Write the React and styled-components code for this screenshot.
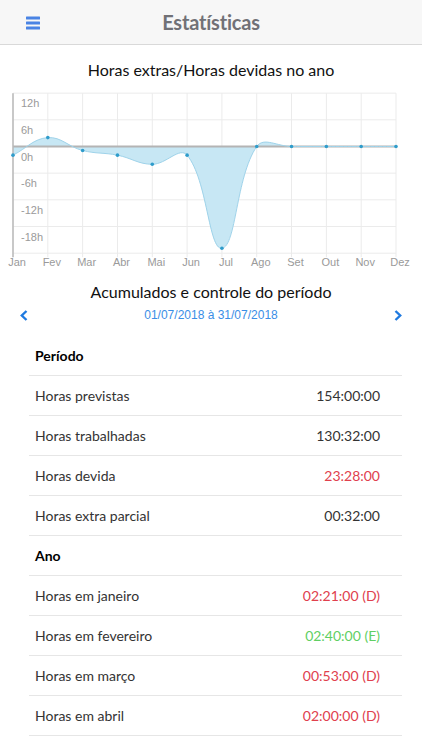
import React from 'react';
import styled, { createGlobalStyle } from 'styled-components';

const GlobalStyle = createGlobalStyle`
  body {
    margin: 0;
    background: #ffffff;
    font-family: Lato, "Open Sans", sans-serif;
    color: #222;
  }
`;

const MONTHS = ['Jan', 'Fev', 'Mar', 'Abr', 'Mai', 'Jun', 'Jul', 'Ago', 'Set', 'Out', 'Nov', 'Dez'];
const VALUES = [-1.95, 2.0, -0.9, -1.95, -4.0, -1.95, -22.9, 0, 0, 0, 0, 0];
const TICKS = [12, 6, 0, -6, -12, -18, -24];

const periodRows = [
  { label: 'Horas previstas', value: '154:00:00' },
  { label: 'Horas trabalhadas', value: '130:32:00' },
  { label: 'Horas devida', value: '23:28:00', tone: 'debt' },
  { label: 'Horas extra parcial', value: '00:32:00' },
];

const yearRows = [
  { label: 'Horas em janeiro', value: '02:21:00 (D)', tone: 'debt' },
  { label: 'Horas em fevereiro', value: '02:40:00 (E)', tone: 'extra' },
  { label: 'Horas em março', value: '00:53:00 (D)', tone: 'debt' },
  { label: 'Horas em abril', value: '02:00:00 (D)', tone: 'debt' },
  { label: 'Horas em maio', value: '04:00:00 (D)', tone: 'debt' },
];

const X0 = 13;
const X1 = 396;
const ZERO = 61.5;
const PX_PER_H = 26.67 / 6;

const xAt = (i) => X0 + (i * (X1 - X0)) / 11;
const yAt = (h) => ZERO - h * PX_PER_H;

// chart.js style spline
const buildCurve = (pts, t = 0.4) => {
  const ctrl = pts.map((p, i) => {
    const prev = pts[i - 1] || p;
    const next = pts[i + 1] || p;
    const d01 = Math.hypot(p.x - prev.x, p.y - prev.y);
    const d12 = Math.hypot(next.x - p.x, next.y - p.y);
    const sum = d01 + d12 || 1;
    const fa = (t * d01) / sum;
    const fb = (t * d12) / sum;
    return {
      inX: p.x - fa * (next.x - prev.x),
      inY: p.y - fa * (next.y - prev.y),
      outX: p.x + fb * (next.x - prev.x),
      outY: p.y + fb * (next.y - prev.y),
    };
  });
  let d = `M${pts[0].x},${pts[0].y}`;
  for (let i = 1; i < pts.length; i++) {
    const a = ctrl[i - 1];
    const b = ctrl[i];
    d += ` C${a.outX},${a.outY} ${b.inX},${b.inY} ${pts[i].x},${pts[i].y}`;
  }
  return d;
};

const Chart = () => {
  const pts = VALUES.map((v, i) => ({ x: xAt(i), y: yAt(v) }));
  const curve = buildCurve(pts);
  const area = `${curve} L${X1},${ZERO} L${X0},${ZERO} Z`;
  return (
    <ChartSvg width="422" height="185" viewBox="0 0 422 185">
      {TICKS.map((h) => (
        <line key={h} x1={X0} x2={X1} y1={yAt(h)} y2={yAt(h)} stroke="#ebebeb" strokeWidth="1" />
      ))}
      {MONTHS.map((m, i) => (
        <line key={m} x1={xAt(i)} x2={xAt(i)} y1={yAt(12)} y2={yAt(-24) + 4} stroke="#ebebeb" strokeWidth="1" />
      ))}
      <path d={area} fill="#c7e7f4" stroke="none" />
      <line x1={X0} x2={X1} y1={ZERO} y2={ZERO} stroke="#b4b4b4" strokeWidth="2" />
      <path d={curve} fill="none" stroke="#9fd3ea" strokeWidth="1" />
      <line x1={X0} x2={X0} y1={yAt(12)} y2={yAt(-24) + 4} stroke="#b8b8b8" strokeWidth="1.5" />
      {pts.map((p, i) => (
        <circle key={i} cx={p.x} cy={p.y} r="1.8" fill="#2f9ccb" />
      ))}
      {TICKS.slice(0, 6).map((h) => (
        <AxisText key={h} x="21" y={yAt(h) + 14}>
          {`${h}h`}
        </AxisText>
      ))}
      {MONTHS.map((m, i) => (
        <AxisText key={m} x={xAt(i) + 4} y="181" textAnchor="middle">
          {m}
        </AxisText>
      ))}
    </ChartSvg>
  );
};

const MenuIcon = () => (
  <svg width="14" height="14" viewBox="0 0 14 14">
    <rect x="0" y="0.5" width="14" height="3" rx="0.5" fill="#4a84e4" />
    <rect x="0" y="5.5" width="14" height="3" rx="0.5" fill="#4a84e4" />
    <rect x="0" y="10.5" width="14" height="3" rx="0.5" fill="#4a84e4" />
  </svg>
);

const Chevron = ({ dir }) => (
  <svg width="8" height="11" viewBox="0 0 8 11">
    <polyline
      points={dir === 'left' ? '6.5,1 1.8,5.5 6.5,10' : '1.5,1 6.2,5.5 1.5,10'}
      fill="none"
      stroke="#1f7ae0"
      strokeWidth="2.4"
      strokeLinejoin="miter"
    />
  </svg>
);

export default function App() {
  return (
    <Page>
      <GlobalStyle />
      <Header>
        <MenuButton>
          <MenuIcon />
        </MenuButton>
        <HeaderTitle>Estatísticas</HeaderTitle>
        <span />
      </Header>

      <ChartTitle>Horas extras/Horas devidas no ano</ChartTitle>
      <Chart />

      <SectionTitle>Acumulados e controle do período</SectionTitle>
      <DateNav>
        <NavButton>
          <Chevron dir="left" />
        </NavButton>
        <DateRange>01/07/2018 à 31/07/2018</DateRange>
        <NavButton>
          <Chevron dir="right" />
        </NavButton>
      </DateNav>

      <List>
        <GroupRow>Período</GroupRow>
        {periodRows.map((r) => (
          <Row key={r.label}>
            <span>{r.label}</span>
            <Value $tone={r.tone}>{r.value}</Value>
          </Row>
        ))}
        <GroupRow>Ano</GroupRow>
        {yearRows.map((r) => (
          <Row key={r.label}>
            <span>{r.label}</span>
            <Value $tone={r.tone}>{r.value}</Value>
          </Row>
        ))}
      </List>
    </Page>
  );
}

const Page = styled.div`
  width: 422px;
  height: 750px;
  overflow: hidden;
`;

const Header = styled.header`
  height: 44px;
  background: #f7f7f7;
  border-bottom: 1px solid #d9d9d9;
  display: grid;
  grid-template-columns: 1fr auto 1fr;
  align-items: center;
`;

const MenuButton = styled.div`
  display: flex;
  padding-left: 26px;
  padding-top: 1px;
`;

const HeaderTitle = styled.h1`
  margin: 0;
  font-size: 20px;
  font-weight: 700;
  color: #717176;
  letter-spacing: -0.2px;
`;

const ChartTitle = styled.h2`
  margin: 15px 0 0;
  font-size: 16px;
  line-height: 20px;
  font-weight: 400;
  text-align: center;
  color: #111;
`;

const ChartSvg = styled.svg`
  display: block;
  margin-top: 5px;
`;

const AxisText = styled.text`
  font-family: "Liberation Sans", Arial, sans-serif;
  font-size: 11px;
  fill: #9a9a9a;
`;

const SectionTitle = styled.h2`
  margin: 11px 0 0;
  font-size: 16px;
  line-height: 22px;
  font-weight: 400;
  text-align: center;
  color: #111;
`;

const DateNav = styled.div`
  margin-top: 2px;
  height: 20px;
  padding: 0 20px;
  display: flex;
  align-items: center;
  justify-content: space-between;
`;

const NavButton = styled.div`
  display: flex;
  align-items: center;
`;

const DateRange = styled.span`
  font-family: "Liberation Sans", Arial, sans-serif;
  font-size: 12px;
  color: #3a8ee6;
`;

const List = styled.div`
  margin: 11px 20px 0 29px;
`;

const RowBase = styled.div`
  box-sizing: border-box;
  height: 40px;
  border-bottom: 1px solid #e6e6e6;
  padding: 0 22px 0 6px;
  display: flex;
  align-items: center;
  justify-content: space-between;
  font-size: 14px;
`;

const GroupRow = styled(RowBase)`
  font-weight: 700;
  color: #000;
`;

const Row = styled(RowBase)`
  color: #333;
`;

const Value = styled.span`
  color: ${({ $tone }) =>
    $tone === 'debt' ? '#e0404d' : $tone === 'extra' ? '#5fcf63' : '#333'};
`;
